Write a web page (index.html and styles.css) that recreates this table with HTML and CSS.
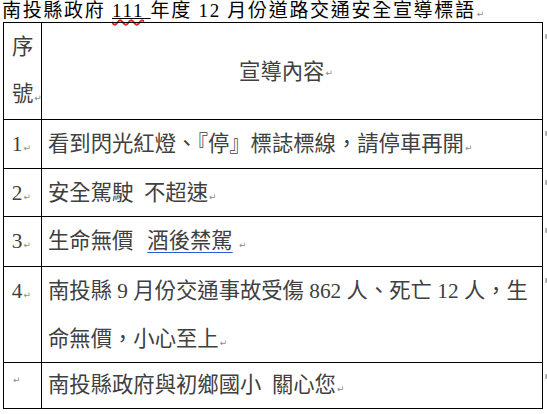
FILE: index.html
```html
<!DOCTYPE html>
<html lang="zh-Hant">
<head>
<meta charset="utf-8">
<title>南投縣政府111年度12月份道路交通安全宣導標語</title>
<link rel="stylesheet" href="styles.css">
</head>
<body>
<div class="title">南投縣政府 <span class="ul"><span class="spell">111</span> </span>年度 12 月份道路交通安全宣導標語<span class="pm">↵</span></div>
<div class="sheet">
  <div class="cell num head">序<br>號<span class="pm">↵</span></div>
  <div class="cell txt head-txt">宣導內容<span class="pm">↵</span></div>
  <div class="endmark"><span></span></div>

  <div class="cell num">1<span class="pm">↵</span></div>
  <div class="cell txt">看到閃光紅燈、『停』標誌標線，請停車再開<span class="pm">↵</span></div>
  <div class="endmark"><span></span></div>

  <div class="cell num">2<span class="pm">↵</span></div>
  <div class="cell txt">安全駕駛&ensp;不超速<span class="pm">↵</span></div>
  <div class="endmark"><span></span></div>

  <div class="cell num">3<span class="pm">↵</span></div>
  <div class="cell txt">生命無價<span class="link">酒後禁駕</span> <span class="pm">↵</span></div>
  <div class="endmark"><span></span></div>

  <div class="cell num">4<span class="pm">↵</span></div>
  <div class="cell txt">南投縣 9 月份交通事故受傷 862 人、死亡 12 人，生<br>命無價，小心至上<span class="pm">↵</span></div>
  <div class="endmark"><span></span></div>

  <div class="cell num empty last"><span class="pm">↵</span></div>
  <div class="cell txt last">南投縣政府與初鄉國小&ensp;關心您<span class="pm">↵</span></div>
  <div class="endmark"><span></span></div>
</div>
</body>
</html>
```
FILE: styles.css
```css
* { box-sizing: border-box; }

html, body {
  margin: 0;
  padding: 0;
  background: #fff;
}

body {
  font-family: "Liberation Serif", "Noto Sans CJK TC", serif;
}

.title {
  padding-left: 2px;
  font-size: 19px;
  line-height: 21px;
  height: 22px;
  letter-spacing: 1.7px;
  color: #000;
  white-space: nowrap;
}

.ul {
  text-decoration: underline solid #000 1px;
  text-underline-offset: 1px;
}

.spell {
  text-decoration: underline wavy #e02020 1.5px;
  text-underline-offset: 2px;
}

.pm {
  font-family: "DejaVu Sans", sans-serif;
  font-size: 9px;
  line-height: 1;
  color: #8a8a8a;
  letter-spacing: 0;
  margin-left: 1px;
  font-weight: normal;
  text-decoration: none;
}

.sheet {
  display: grid;
  grid-template-columns: 38px 502px 5px;
  grid-template-rows: 97px 49px 48px 50px 96px 47px;
  margin-left: 3px;
}

.cell {
  border-top: 1px solid #000;
  border-left: 1px solid #000;
  font-size: 21.33px;
  line-height: 48px;
  color: #404040;
  white-space: nowrap;
  overflow: hidden;
}

.num {
  text-align: right;
  padding-right: 10px;
}

.num.head {
  text-align: left;
  padding-left: 8px;
  padding-right: 0;
  line-height: 47px;
  padding-top: 1px;
}

.txt {
  border-right: 1px solid #000;
  padding-left: 6px;
}

.head-txt {
  display: flex;
  align-items: center;
  justify-content: center;
  padding-left: 0;
  padding-right: 12px;
  line-height: 1;
  padding-top: 4px;
}

.link {
  margin-left: 14px;
  text-decoration: underline solid #2a5bd7 1px;
  text-underline-offset: 4px;
}

.last {
  border-bottom: 1px solid #000;
  line-height: 44px;
}

.num.empty.last {
  text-align: left;
  padding-left: 8px;
  line-height: 26px;
}

.endmark {
  padding-top: 12px;
  padding-left: 2px;
}

.endmark span {
  display: block;
  width: 3px;
  height: 5px;
  background: #b0b0b0;
  border-radius: 1px 0 0 1px;
}
```
